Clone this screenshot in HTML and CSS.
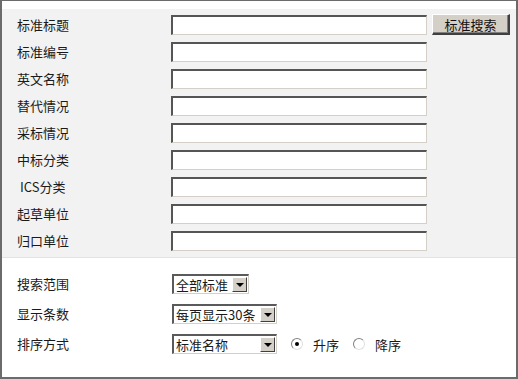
FILE: index.html
```html
<!DOCTYPE html>
<html lang="zh-CN">
<head>
<meta charset="utf-8">
<title>标准搜索</title>
<link rel="stylesheet" href="styles.css">
</head>
<body>
<div class="frame">
  <div class="top">
    <div class="form-top">
      <span class="label">标准标题</span><span class="input"></span><button class="btn" type="button">标准搜索</button>
      <span class="label">标准编号</span><span class="input"></span><span></span>
      <span class="label">英文名称</span><span class="input"></span><span></span>
      <span class="label">替代情况</span><span class="input"></span><span></span>
      <span class="label">采标情况</span><span class="input"></span><span></span>
      <span class="label">中标分类</span><span class="input"></span><span></span>
      <span class="label">&nbsp;ICS分类</span><span class="input"></span><span></span>
      <span class="label">起草单位</span><span class="input"></span><span></span>
      <span class="label">归口单位</span><span class="input"></span><span></span>
    </div>
  </div>
  <div class="bottom">
    <div class="row">
      <span class="label">搜索范围</span>
      <span class="select w76"><span class="sel-text">全部标准</span><span class="arrow"></span></span>
    </div>
    <div class="row">
      <span class="label">显示条数</span>
      <span class="select w105"><span class="sel-text">每页显示30条</span><span class="arrow"></span></span>
    </div>
    <div class="row">
      <span class="label">排序方式</span>
      <span class="select w105"><span class="sel-text">标准名称</span><span class="arrow"></span></span>
      <span class="radio checked"></span><span class="rlabel">升序</span>
      <span class="radio"></span><span class="rlabel">降序</span>
    </div>
  </div>
</div>
</body>
</html>
```

FILE: styles.css
```css
html, body {
  margin: 0;
  padding: 0;
  background: #ffffff;
}
.frame {
  width: 518px;
  height: 379px;
  box-sizing: border-box;
  border-top: 1px solid #6b6b6b;
  border-left: 2px solid #6b6b6b;
  border-right: 2px solid #6b6b6b;
  border-bottom: 2px solid #6b6b6b;
  background: #ffffff;
  font-family: "Noto Sans CJK SC", "Liberation Sans", sans-serif;
  font-size: 13px;
  color: #1a1a1a;
}
.top {
  margin-top: 8px;
  height: 248px;
  background: #f2f2f2;
  border-bottom: 1px solid #d5e6ee;
}
.form-top {
  display: grid;
  grid-template-columns: 154px 256px auto;
  grid-auto-rows: 20px;
  row-gap: 7px;
  padding: 6px 0 0 15px;
  align-items: center;
}
.label {
  line-height: 20px;
  white-space: nowrap;
}
.input {
  display: block;
  height: 20px;
  box-sizing: border-box;
  background: #ffffff;
  border-top: 2px solid #555555;
  border-left: 2px solid #555555;
  border-right: 1px solid #d4d0c8;
  border-bottom: 1px solid #d4d0c8;
}
.btn {
  margin: -1px 0 0 5px;
  width: 78px;
  height: 21px;
  padding: 0;
  font-family: "Noto Sans CJK SC", "Liberation Sans", sans-serif;
  font-size: 13px;
  line-height: 17px;
  color: #111;
  background: #d4d0c8;
  border-style: solid;
  border-width: 1px 2px 2px 1px;
  border-color: #ffffff #404040 #404040 #ffffff;
  box-shadow: inset -1px -1px 0 #808080;
  align-self: start;
}
.bottom {
  padding: 16px 0 0 15px;
  display: flex;
  flex-direction: column;
  gap: 10px;
}
.row {
  display: flex;
  align-items: center;
  height: 20px;
}
.row .label {
  width: 155px;
}
.select {
  display: flex;
  align-items: center;
  height: 20px;
  box-sizing: border-box;
  background: #ffffff;
  border-top: 2px solid #5a5a5a;
  border-left: 2px solid #5a5a5a;
  border-right: 1px solid #d4d0c8;
  border-bottom: 1px solid #d4d0c8;
  padding: 0 1px 0 0;
}
.w76 { width: 77px; }
.w105 { width: 105px; }
.sel-text {
  flex: 1;
  padding-left: 2px;
  line-height: 17px;
  white-space: nowrap;
}
.arrow {
  position: relative;
  flex: none;
  width: 15px;
  height: 15px;
  box-sizing: border-box;
  background: #d4d0c8;
  border-style: solid;
  border-width: 1px;
  border-color: #ffffff #404040 #404040 #ffffff;
}
.arrow::after {
  content: "";
  position: absolute;
  left: 3px;
  top: 5px;
  border-left: 4px solid transparent;
  border-right: 4px solid transparent;
  border-top: 4px solid #000;
}
.radio {
  position: relative;
  width: 12px;
  height: 12px;
  box-sizing: border-box;
  border-radius: 50%;
  background: #ffffff;
  border: 1px solid;
  border-color: #808080 #e0e0e0 #e0e0e0 #808080;
  margin-left: 14px;
}
.radio.checked::after {
  content: "";
  position: absolute;
  left: 3px;
  top: 3px;
  width: 4px;
  height: 4px;
  border-radius: 50%;
  background: #000;
}
.rlabel {
  margin-left: 10px;
}
```
